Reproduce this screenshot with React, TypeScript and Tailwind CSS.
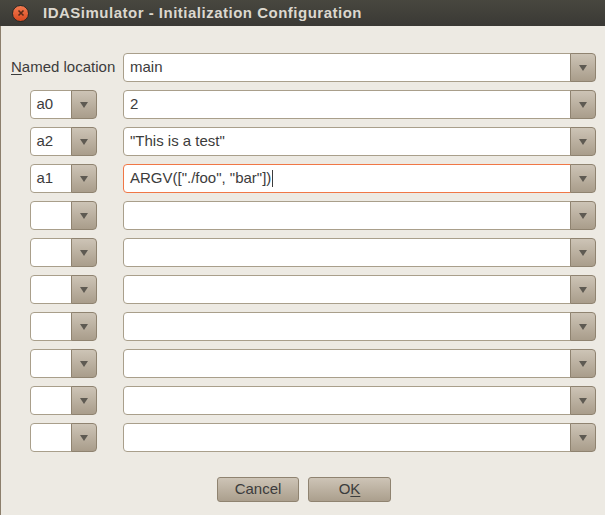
import React from 'react';

type Row = { key: string; value: string; focused?: boolean };

const rows: Row[] = [
  { key: 'a0', value: '2' },
  { key: 'a2', value: '"This is a test"' },
  { key: 'a1', value: 'ARGV(["./foo", "bar"])', focused: true },
  { key: '', value: '' },
  { key: '', value: '' },
  { key: '', value: '' },
  { key: '', value: '' },
  { key: '', value: '' },
  { key: '', value: '' },
  { key: '', value: '' },
];

function Arrow() {
  return (
    <svg width="10" height="8" viewBox="0 0 10 8">
      <path d="M1 1 L9 1 L5 7 Z" fill="#5e5a52" />
    </svg>
  );
}

function ComboButton() {
  return (
    <div className="w-[26px] h-full flex items-center justify-center bg-gradient-to-b from-[#cdc4b6] to-[#a99d8b] border border-[#8f8370] rounded-r-[4px] -ml-px">
      <Arrow />
    </div>
  );
}

function Combo({ value, focused, small }: { value: string; focused?: boolean; small?: boolean }) {
  return (
    <div className={`flex h-[29px] ${small ? 'w-[67px]' : 'w-full'}`}>
      <div
        className={`flex-1 flex items-center bg-white rounded-l-[4px] border px-[6px] text-[15px] text-[#3c3c3c] whitespace-nowrap ${
          focused ? 'border-[#f07746]' : 'border-[#a99f8b]'
        }`}
      >
        {value}
        {focused && <span className="w-px h-[17px] bg-[#3c3c3c] ml-[1px]" />}
      </div>
      <ComboButton />
    </div>
  );
}

export default function App() {
  return (
    <div className="w-[605px] h-[515px] bg-[#edeae3] flex flex-col" style={{ fontFamily: '"Liberation Sans", "DejaVu Sans", sans-serif' }}>
      <div className="h-[26px] bg-gradient-to-b from-[#48473f] to-[#3a3935] flex items-center pl-[12px] gap-[14px]">
        <div className="w-[17px] h-[17px] rounded-full bg-gradient-to-b from-[#f27a4f] to-[#d8481e] border border-[#2a2925] flex items-center justify-center">
          <svg width="8" height="8" viewBox="0 0 8 8">
            <path d="M1.5 1.5 L6.5 6.5 M6.5 1.5 L1.5 6.5" stroke="#5a2a18" strokeWidth="1.6" />
          </svg>
        </div>
        <span className="text-[#dcd8cf] font-bold text-[15px] tracking-[0.5px] whitespace-nowrap">IDASimulator - Initialization Configuration</span>
      </div>
      <div className="flex-1 border-l border-[#8c7f6c] flex flex-col">
        <div className="grid grid-cols-[104px_1fr] gap-x-[8px] gap-y-[8px] pl-[10px] pr-[9px] pt-[27px]">
          <div className="h-[29px] flex items-center text-[15px] text-[#3c3c3c] whitespace-nowrap">
            <span><span className="underline underline-offset-2">N</span>amed location</span>
          </div>
          <Combo value="main" />
          {rows.map((r, i) => (
            <React.Fragment key={i}>
              <div className="flex justify-center">
                <Combo value={r.key} small />
              </div>
              <Combo value={r.value} focused={r.focused} />
            </React.Fragment>
          ))}
        </div>
        <div className="flex justify-center gap-[9px] mt-[25px] pl-[2px]">
          <button className="w-[82px] h-[25px] rounded-[3px] border border-[#8f8370] bg-gradient-to-b from-[#cdc4b6] to-[#ab9f8d] text-[15px] text-[#3c3c3c]">
            Cancel
          </button>
          <button className="w-[83px] h-[25px] rounded-[3px] border border-[#8f8370] bg-gradient-to-b from-[#cdc4b6] to-[#ab9f8d] text-[15px] text-[#3c3c3c]">
            O<span className="underline underline-offset-2">K</span>
          </button>
        </div>
      </div>
    </div>
  );
}
